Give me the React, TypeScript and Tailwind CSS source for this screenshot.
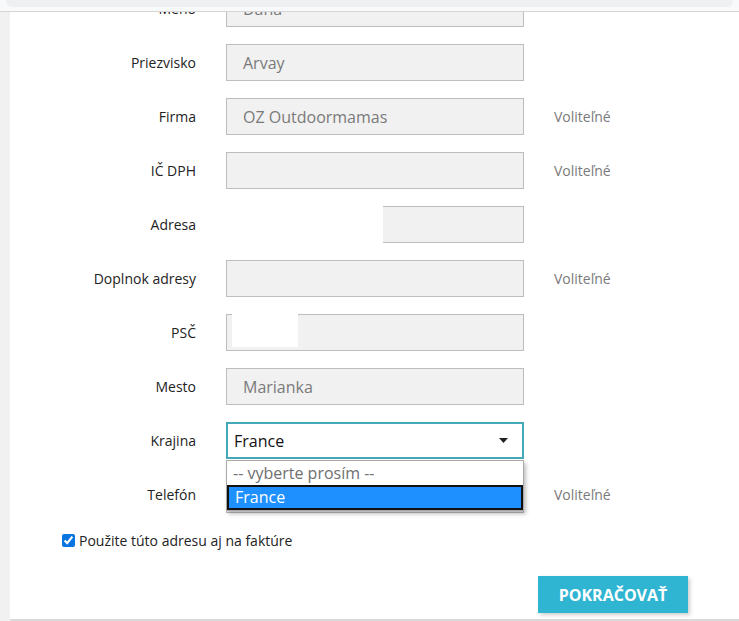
import { ReactNode } from "react";

const FONT = { fontFamily: '"Open Sans", "Noto Sans", sans-serif' };

interface IRowProps {
  readonly label: string;
  readonly value?: string;
  readonly optional?: boolean;
  readonly children?: ReactNode;
}

function Row({ label, value, optional, children }: IRowProps) {
  return (
    <div className="flex items-center h-[37px] mb-[17px]">
      <label className="w-[186px] text-right text-[14px] text-[#232323]">
        {label}
      </label>
      <div className="relative ml-[30px] w-[298px] h-[37px]">
        {children ?? (
          <div className="h-full border border-[#bdbdbd] bg-[#f1f1f1] px-4 flex items-center text-[16px] text-[#7a7a7a]">
            {value}
          </div>
        )}
      </div>
      {optional && (
        <span className="ml-[30px] text-[14px] text-[#7a7a7a]">Voliteľné</span>
      )}
    </div>
  );
}

function PlainInput() {
  return <div className="h-full border border-[#bdbdbd] bg-[#f1f1f1]" />;
}

export default function App() {
  return (
    <div style={FONT} className="w-[739px] h-[621px] bg-white overflow-hidden flex flex-col">
      <div className="h-[12px] shrink-0 bg-[#f8f9fa] border-b border-[#d6d6d6] px-[6px]">
        <div className="h-[7px] bg-[#eef0f2] rounded-b-[6px]" />
      </div>
      <div className="flex flex-1 min-h-0">
        <div className="w-[10px] bg-[#f1f1f1] shrink-0" />
        <div className="flex-1 min-h-0 overflow-hidden border-b-2 border-[#d9d9d9]">
          <div className="mt-[-22px]">
            <Row label="Meno" value="Dana" />
            <Row label="Priezvisko" value="Arvay" />
            <Row label="Firma" value="OZ Outdoormamas" optional />
            <Row label="IČ DPH" optional />
            <Row label="Adresa">
              <PlainInput />
              <div className="absolute left-0 top-[-1px] w-[157px] h-[39px] bg-white" />
            </Row>
            <Row label="Doplnok adresy" optional />
            <Row label="PSČ">
              <PlainInput />
              <div className="absolute left-[6px] top-0 w-[66px] h-[33px] bg-white" />
            </Row>
            <Row label="Mesto" value="Marianka" />
            <Row label="Krajina">
              <div className="h-full border-2 border-[#45a9b8] bg-white pl-[6px] pr-[14px] flex items-center justify-between text-[16px] text-[#111]">
                <span>France</span>
                <svg width="9" height="5" viewBox="0 0 9 5">
                  <path d="M0 0h9L4.5 5z" fill="#222" />
                </svg>
              </div>
              <div className="absolute z-10 left-0 top-[38px] w-[298px] bg-white border border-[#a9a9a9] shadow-[2px_3px_4px_rgba(0,0,0,0.25)] text-[16px] leading-[22px]">
                <div className="px-[6px] h-[24px] pt-[1px] text-[#6f6f6f]">-- vyberte prosím --</div>
                <div className="px-[6px] h-[25px] bg-[#1e90ff] border-2 border-[#111] text-white leading-[20px]">
                  France
                </div>
              </div>
            </Row>
            <Row label="Telefón" optional />
            <div className="flex items-center ml-[52px] mt-[2px] text-[14px] text-[#232323]">
              <input
                type="checkbox"
                defaultChecked
                className="w-[13px] h-[13px] mr-[4px] accent-[#0b75e0]"
              />
              <span>Použite túto adresu aj na faktúre</span>
            </div>
            <div className="flex justify-end mr-[51px] mt-[25px]">
              <button className="w-[150px] h-[37px] bg-[#2fb5d2] text-white font-bold text-[16px] uppercase shadow-[2px_2px_4px_rgba(0,0,0,0.2)]">
                Pokračovať
              </button>
            </div>
          </div>
        </div>
      </div>
    </div>
  );
}
